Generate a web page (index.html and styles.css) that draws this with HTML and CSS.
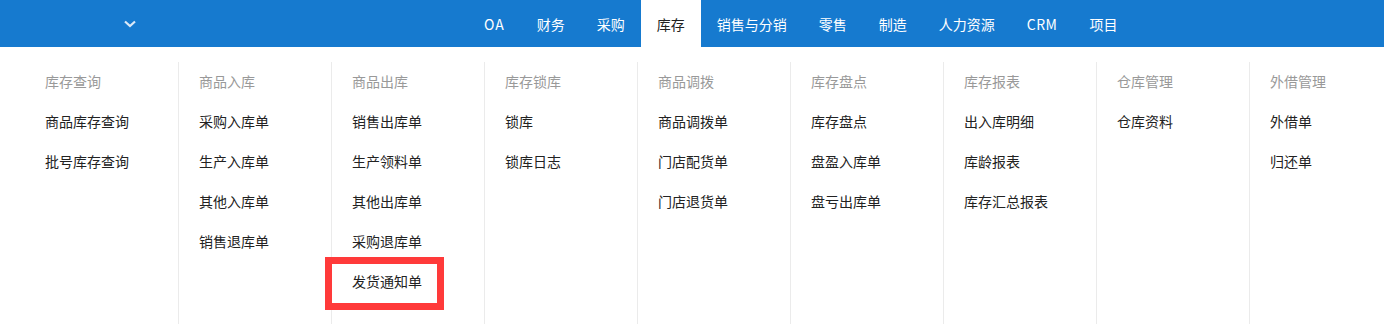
FILE: index.html
```html
<!DOCTYPE html>
<html lang="zh-CN">
<head>
<meta charset="utf-8">
<title>库存</title>
<link rel="stylesheet" href="styles.css">
</head>
<body>
<header class="topbar">
  <div class="brand">
    <svg class="chev" width="12" height="8" viewBox="0 0 12 8"><path d="M1 1.5 L6 6 L11 1.5" fill="none" stroke="#dbe9f7" stroke-width="2.2"/></svg>
  </div>
  <nav class="nav">
    <a class="nav-item latin-wide">OA</a>
    <a class="nav-item">财务</a>
    <a class="nav-item">采购</a>
    <a class="nav-item active">库存</a>
    <a class="nav-item">销售与分销</a>
    <a class="nav-item">零售</a>
    <a class="nav-item">制造</a>
    <a class="nav-item">人力资源</a>
    <a class="nav-item latin">CRM</a>
    <a class="nav-item">项目</a>
  </nav>
</header>
<main class="menu">
  <section class="col">
    <div class="head">库存查询</div>
    <div class="item">商品库存查询</div>
    <div class="item">批号库存查询</div>
  </section>
  <section class="col">
    <div class="head">商品入库</div>
    <div class="item">采购入库单</div>
    <div class="item">生产入库单</div>
    <div class="item">其他入库单</div>
    <div class="item">销售退库单</div>
  </section>
  <section class="col">
    <div class="head">商品出库</div>
    <div class="item">销售出库单</div>
    <div class="item">生产领料单</div>
    <div class="item">其他出库单</div>
    <div class="item">采购退库单</div>
    <div class="item marked">发货通知单<span class="mark"></span></div>
  </section>
  <section class="col">
    <div class="head">库存锁库</div>
    <div class="item">锁库</div>
    <div class="item">锁库日志</div>
  </section>
  <section class="col">
    <div class="head">商品调拨</div>
    <div class="item">商品调拨单</div>
    <div class="item">门店配货单</div>
    <div class="item">门店退货单</div>
  </section>
  <section class="col">
    <div class="head">库存盘点</div>
    <div class="item">库存盘点</div>
    <div class="item">盘盈入库单</div>
    <div class="item">盘亏出库单</div>
  </section>
  <section class="col">
    <div class="head">库存报表</div>
    <div class="item">出入库明细</div>
    <div class="item">库龄报表</div>
    <div class="item">库存汇总报表</div>
  </section>
  <section class="col">
    <div class="head">仓库管理</div>
    <div class="item">仓库资料</div>
  </section>
  <section class="col">
    <div class="head">外借管理</div>
    <div class="item">外借单</div>
    <div class="item">归还单</div>
  </section>
</main>
</body>
</html>
```

FILE: styles.css
```css
* { box-sizing: border-box; }
html, body { margin: 0; padding: 0; }
body {
  width: 1384px;
  height: 324px;
  overflow: hidden;
  background: #fff;
  font-family: "Noto Sans CJK SC", "Noto Sans", sans-serif;
  font-size: 14px;
  color: #333;
}
.topbar {
  height: 47px;
  background: #167acf;
  display: flex;
  align-items: stretch;
}
.brand {
  width: 468px;
  flex-shrink: 0;
  display: flex;
  align-items: center;
  padding-left: 124px;
}
.chev { display: block; }
.nav {
  display: flex;
  align-items: stretch;
}
.nav-item {
  display: flex;
  align-items: center;
  padding: 0 16px;
  color: #fff;
  font-size: 14px;
  white-space: nowrap;
  cursor: pointer;
}
.nav-item.latin-wide { letter-spacing: 1px; }
.nav-item.latin { letter-spacing: 0.5px; }
.nav-item.active {
  background: #fff;
  color: #222;
}
.menu {
  display: flex;
  padding: 15px 0 0 25px;
  height: 277px;
}
.col {
  width: 153px;
  flex-shrink: 0;
  padding-left: 20px;
}
.col + .col {
  border-left: 1px solid #ebebeb;
}
.head, .item {
  height: 40px;
  line-height: 39px;
  white-space: nowrap;
}
.head { color: #999; }
.item { color: #222; }
.marked { position: relative; }
.mark {
  position: absolute;
  left: -27px;
  top: -5px;
  width: 119px;
  height: 53px;
  border: 7px solid #ff3a3a;
}
```
